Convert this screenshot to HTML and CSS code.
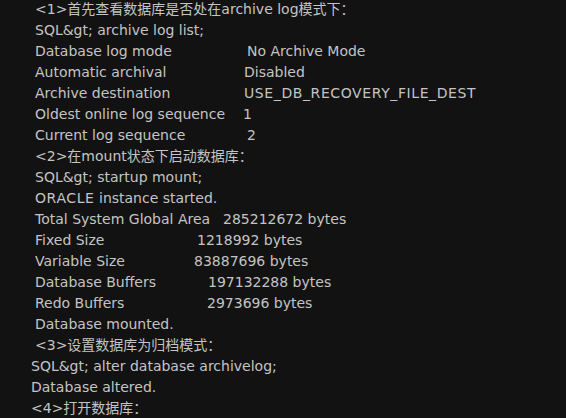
FILE: index.html
```html
<!DOCTYPE html>
<html lang="zh-CN">
<head>
  <meta charset="UTF-8" />
  <title>归档模式</title>
  <link rel="stylesheet" href="styles.css">
</head>
<body>
  <div class="console">
    <div class="line">&lt;1&gt;首先查看数据库是否处在archive log模式下：</div>
    <div class="line">SQL&amp;gt; archive log list;</div>
    <div class="line"><span class="key t212">Database log mode</span>No Archive Mode</div>
    <div class="line"><span class="key t209">Automatic archival</span>Disabled</div>
    <div class="line"><span class="key t209">Archive destination</span><span class="caps">USE_DB_RECOVERY_FILE_DEST</span></div>
    <div class="line"><span class="key t208">Oldest online log sequence</span>1</div>
    <div class="line"><span class="key t212">Current log sequence</span>2</div>
    <div class="line">&lt;2&gt;在mount状态下启动数据库：</div>
    <div class="line">SQL&amp;gt; startup mount;</div>
    <div class="line"><span class="caps">ORACLE</span> instance started.</div>
    <div class="line"><span class="key t188">Total System Global Area</span>285212672 bytes</div>
    <div class="line"><span class="key t162">Fixed Size</span>1218992 bytes</div>
    <div class="line"><span class="key t159">Variable Size</span>83887696 bytes</div>
    <div class="line"><span class="key t173">Database Buffers</span>197132288 bytes</div>
    <div class="line"><span class="key t172">Redo Buffers</span>2973696 bytes</div>
    <div class="line">Database mounted.</div>
    <div class="line">&lt;3&gt;设置数据库为归档模式：</div>
    <div class="line outdent">SQL&amp;gt; alter database archivelog;</div>
    <div class="line outdent">Database altered.</div>
    <div class="line outdent">&lt;4&gt;打开数据库：</div>
  </div>
</body>
</html>
```

FILE: styles.css
```css
* {
  margin: 0;
  padding: 0;
  box-sizing: border-box;
}

body {
  background: #121212;
  color: #c4c4c4;
  font-family: "DejaVu Sans", Verdana, "Noto Sans CJK SC", sans-serif;
  font-size: 14px;
  overflow: hidden;
}

.console {
  margin-top: -1px;
  padding-left: 35px;
}

.line {
  line-height: 21px;
  white-space: nowrap;
}

.outdent {
  margin-left: -4px;
}

.key {
  display: inline-block;
}

/* Verdana capitals run wider than DejaVu's */
.caps {
  letter-spacing: 0.6px;
}

.t212 { width: 212px; }
.t209 { width: 209px; }
.t208 { width: 208px; }
.t188 { width: 188px; }
.t173 { width: 173px; }
.t172 { width: 172px; }
.t162 { width: 162px; }
.t159 { width: 159px; }
```
